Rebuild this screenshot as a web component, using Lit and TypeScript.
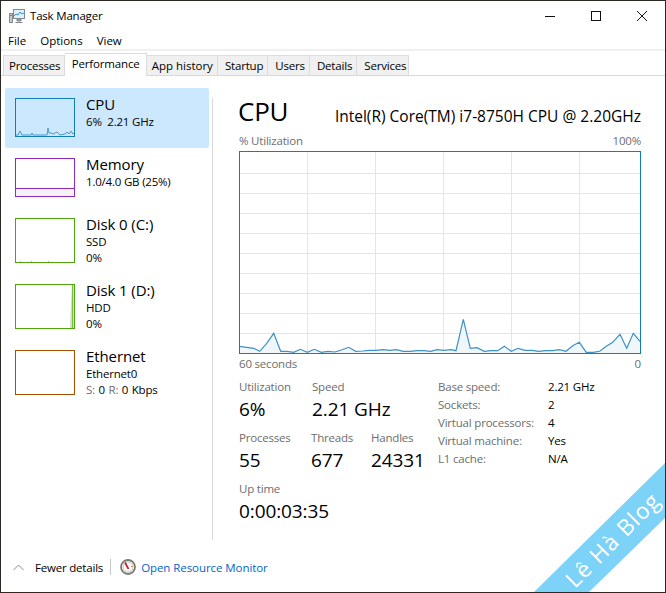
import { LitElement, html, css, svg } from "lit";
import { customElement } from "lit/decorators.js";

const left: [number, number][] = [[22,199],[65,205],[83,214],[104,190],[125,160],[146,214],[165,214],[185,217],[205,208],[226,217],[247,208],[268,217],[288,214],[309,216],[330,209],[350,202],[371,214],[392,213],[412,211],[432,211],[453,209],[473,211],[493,209],[514,214],[535,214],[555,212],[576,212],[596,214],[615,209],[636,211]];
const right: [number, number][] = [[15,209],[30,212],[52,118],[73,205],[93,203],[115,214],[135,212],[155,212],[175,199],[196,214],[216,205],[237,211],[258,211],[278,214],[298,212],[320,212],[340,209],[360,214],[380,197],[400,187],[421,217],[441,217],[461,214],[481,199],[500,187],[522,163],[542,205],[562,160],[582,184]];
const pts: [number, number][] = [
  ...left.map(([x, y]) => [232 + x / 3 - 239, 280 + y / 3 - 151] as [number, number]),
  ...right.map(([x, y]) => [446 + x / 3 - 239, 280 + y / 3 - 151] as [number, number]),
];
const linePts = pts.map(([x, y]) => `${x.toFixed(1)},${y.toFixed(1)}`).join(" ");
const W = 401, H = 202;

function chart() {
  const v = [68, 136, 204, 272, 340];
  const h = [22, 42, 62, 82, 102, 122, 142, 162, 182];
  return html`<svg class="chart" width="402" height="203" viewBox="0 0 402 203">
    ${v.map((x) => svg`<line x1=${x + 0.5} x2=${x + 0.5} y1="0" y2=${H} stroke="#d9e8f2"/>`)}
    ${h.map((y) => svg`<line x1="0" x2=${W} y1=${y + 0.5} y2=${y + 0.5} stroke="#d9e8f2"/>`)}
    <polygon points="0,${H} ${linePts} ${W},${H}" fill="#f1f6fa"/>
    <polyline points=${linePts} fill="none" stroke="#3d92c8" stroke-width="1.2"/>
    <rect x="0.5" y="0.5" width=${W} height=${H} fill="none" stroke="#117dbb"/>
  </svg>`;
}

function thumb(kind: string, color: string, w: number, hh: number) {
  const inner = w - 1, bot = hh - 1;
  let content: unknown = null;
  if (kind === "cpu") {
    const p = [[0,0],[3,0],[5,-4],[7,0],[16,0],[17,-2],[18,0],[32,0],[33,-7],[34,-2],[36,-2],[38,-1],[42,-3],[45,0],[50,-1],[52,-3],[54,-1],[56,-4],[58,-1],[60,-3]];
    const s = p.map(([x, y]) => `${x},${bot - 1 + y}`).join(" ");
    content = svg`<polygon points="0,${bot} ${s} 60,${bot}" fill="#cfe5f3"/><polyline points=${s} fill="none" stroke="#4a9bcb"/>`;
  } else if (kind === "mem") {
    content = svg`<rect x="0" y="30" width=${w - 1} height="9" fill="#f4f2f8"/><line x1="0" x2=${w - 1} y1="30.5" y2="30.5" stroke=${color}/>`;
  } else if (kind === "d0") {
    content = svg`<path d="M5.5 44v-1M16.5 44v-1M33.5 44v-1" stroke="#9fce7f"/>`;
  } else if (kind === "d1") {
    content = svg`<polygon points="55,44 56,18 57,0 59,0 59,44" fill="#cfe2c0"/><line x1="57.5" x2="57.5" y1="0" y2="44" stroke="#7dbb4c"/>`;
  }
  return html`<svg class="thumb" width=${w + 1} height=${hh + 1} viewBox="0 0 ${w + 1} ${hh + 1}">
    ${content}
    <rect x="0.5" y="0.5" width=${inner} height=${bot} fill="none" stroke=${color}/>
  </svg>`;
}

@customElement("app-root")
export class AppRoot extends LitElement {
  static styles = css`
    :host {
      display: block;
      width: 666px;
      height: 593px;
      box-sizing: border-box;
      border: 1px solid #2b2723;
      background: #fff;
      position: relative;
      overflow: hidden;
      font-family: "Open Sans", "Noto Sans", sans-serif;
      font-size: 11.5px;
      letter-spacing: -0.2px;
      color: #000;
    }
    .titlebar { height: 29px; display: flex; align-items: center; padding-left: 8px; }
    .app-icon { margin-right: 5px; }
    .title { flex: 1; }
    .winbtns { display: flex; height: 29px; }
    .winbtn { width: 46px; display: flex; align-items: center; justify-content: center; }
    .menu { height: 18px; padding-top: 1px; display: flex; align-items: center; gap: 14px; padding-left: 7px; letter-spacing: 0; }
    .band { height: 2px; background: #f0f0f0; }
    .tabs { height: 24px; display: flex; align-items: flex-end; padding-left: 2px; border-bottom: 1px solid #d9d9d9; }
    .tab {
      height: 20px; box-sizing: border-box; padding: 0 4px 0 5px; display: flex; align-items: center;
      background: #f0f0f0; border: 1px solid #dcdcdc; border-bottom: none; border-left: none;
      letter-spacing: 0;
    }
    .tab.first { border-left: 1px solid #dcdcdc; letter-spacing: -0.25px; }
    .tab.active { height: 23px; background: #fff; padding: 0 6px 4px 6.5px; margin-bottom: -1px; position: relative; letter-spacing: -0.15px; }
    .tab.tight { padding: 0 4px 0 7px; letter-spacing: -0.18px; }
    .tab.last { padding-right: 2px; }
    .main { display: flex; height: 474px; }
    .side { width: 211px; margin-top: 12px; box-sizing: border-box; padding-left: 4px; flex: none; }
    .divider { width: 1px; flex: none; background: #d9d9d9; margin-top: 22px; height: 442px; }
    .item { display: flex; width: 204px; box-sizing: border-box; padding: 10px 0 0 10px; }
    .item.sel { background: #cce8ff; height: 60px; border-radius: 2px; }
    .h60 { height: 60px; }
    .h66 { height: 66px; }
    .thumb { flex: none; display: block; }
    .info { margin-left: 10px; margin-top: -3px; line-height: 15.5px; white-space: nowrap; }
    .name { font-size: 15px; line-height: 19px; letter-spacing: -0.1px; }
    .wide { word-spacing: 0.8px; }
    .mut { color: #6d6d6d; }
    .content { flex: 1; padding: 0 24px 0 26px; min-width: 0; }
    .head { display: flex; justify-content: space-between; align-items: flex-end; height: 45px; margin-top: 12px; }
    .cpu { font-size: 26px; line-height: 34px; letter-spacing: -0.2px; margin-bottom: 5px; margin-left: -1px; }
    .model { font-size: 15.5px; line-height: 20px; letter-spacing: 0; margin-bottom: 7px; white-space: nowrap; }
    .cap { display: flex; justify-content: space-between; color: #6d6d6d; height: 15px; line-height: 15px; }
    .cap.top { margin-bottom: 3px; }
    .cap.bottom { margin-top: 2px; }
    .chart { display: block; }
    .stats { display: flex; margin-top: 7px; }
    .lefts { width: 199px; flex: none; padding-top: 1px; }
    .srow { display: flex; margin-bottom: 7px; }
    .stat { flex: none; }
    .w73 { width: 73px; }
    .w72 { width: 72px; }
    .w60 { width: 60px; }
    .lab { color: #6d6d6d; line-height: 16px; height: 16px; }
    .val { font-size: 19px; line-height: 28px; letter-spacing: -0.1px; }
    .grid { display: grid; grid-template-columns: 110px auto; grid-auto-rows: 18px; line-height: 18px; align-self: flex-start; }
    .foot { display: flex; align-items: center; height: 34px; padding-left: 12px; }
    .chev { margin-right: 11px; }
    .sep { width: 1px; height: 16px; background: #c8c8c8; margin: 0 9px 0 7px; }
    .link { color: #0066cc; margin-left: 5px; letter-spacing: -0.07px; }
    .mark { position: absolute; right: -1px; bottom: -1px; display: block; }
    .mark text { font-family: "Open Sans", sans-serif; font-size: 22.5px; fill: #fff; letter-spacing: 1.2px; }
  `;

  render() {
    return html`
      <div class="titlebar">
        <svg class="app-icon" width="16" height="16" viewBox="0 0 16 16">
          <rect x="0.5" y="5.5" width="3" height="9" fill="#c9c9c9" stroke="#8a8a8a"/>
          <rect x="1" y="7" width="2" height="1" fill="#4caf50"/>
          <rect x="4.5" y="1.5" width="11" height="9" fill="#dff0fb" stroke="#7c8b96"/>
          <path d="M5 8l2-2 2 1 2-3 2 2 2-1" fill="none" stroke="#3b8fd0"/>
          <path d="M8 11h4v2H8zM6.5 14.5h7" fill="#9a9a9a" stroke="#8a8a8a"/>
        </svg>
        <span class="title">Task Manager</span>
        <div class="winbtns">
          <div class="winbtn"><svg width="10" height="10" viewBox="0 0 10 10"><path d="M0 5.5h10" stroke="#111"/></svg></div>
          <div class="winbtn"><svg width="10" height="10" viewBox="0 0 10 10"><rect x="0.5" y="0.5" width="9" height="9" fill="none" stroke="#111"/></svg></div>
          <div class="winbtn"><svg width="10" height="10" viewBox="0 0 10 10"><path d="M0 0l10 10M10 0L0 10" stroke="#111"/></svg></div>
        </div>
      </div>
      <div class="menu"><span>File</span><span>Options</span><span>View</span></div>
      <div class="band"></div>
      <div class="tabs">
        <div class="tab first">Processes</div>
        <div class="tab active">Performance</div>
        <div class="tab">App history</div>
        <div class="tab tight">Startup</div>
        <div class="tab tight">Users</div>
        <div class="tab tight">Details</div>
        <div class="tab tight last">Services</div>
      </div>
      <div class="main">
        <div class="side">
          <div class="item sel">
            ${thumb("cpu", "#117dbb", 60, 39)}
            <div class="info"><div class="name">CPU</div><div>6%&nbsp; 2.21 GHz</div></div>
          </div>
          <div class="item h60">
            ${thumb("mem", "#9528b4", 60, 39)}
            <div class="info"><div class="name">Memory</div><div>1.0/4.0 GB (25%)</div></div>
          </div>
          <div class="item h66">
            ${thumb("d0", "#4da60c", 60, 45)}
            <div class="info"><div class="name">Disk 0 (C:)</div><div>SSD</div><div>0%</div></div>
          </div>
          <div class="item h66">
            ${thumb("d1", "#4da60c", 60, 45)}
            <div class="info"><div class="name">Disk 1 (D:)</div><div>HDD</div><div>0%</div></div>
          </div>
          <div class="item h66">
            ${thumb("eth", "#a74f01", 60, 45)}
            <div class="info"><div class="name">Ethernet</div><div>Ethernet0</div><div class="wide"><span class="mut">S:</span> 0 <span class="mut">R:</span> 0 Kbps</div></div>
          </div>
        </div>
        <div class="divider"></div>
        <div class="content">
          <div class="head"><div class="cpu">CPU</div><div class="model">Intel(R) Core(TM) i7-8750H CPU @ 2.20GHz</div></div>
          <div class="cap top"><span>% Utilization</span><span>100%</span></div>
          ${chart()}
          <div class="cap bottom"><span>60 seconds</span><span>0</span></div>
          <div class="stats">
            <div class="lefts">
              <div class="srow">
                <div class="stat w73"><div class="lab">Utilization</div><div class="val">6%</div></div>
                <div class="stat"><div class="lab">Speed</div><div class="val">2.21 GHz</div></div>
              </div>
              <div class="srow">
                <div class="stat w72"><div class="lab">Processes</div><div class="val">55</div></div>
                <div class="stat w60"><div class="lab">Threads</div><div class="val">677</div></div>
                <div class="stat"><div class="lab">Handles</div><div class="val">24331</div></div>
              </div>
              <div class="srow">
                <div class="stat"><div class="lab">Up time</div><div class="val">0:00:03:35</div></div>
              </div>
            </div>
            <div class="grid">
              <span class="mut">Base speed:</span><span>2.21 GHz</span>
              <span class="mut">Sockets:</span><span>2</span>
              <span class="mut">Virtual processors:</span><span>4</span>
              <span class="mut">Virtual machine:</span><span>Yes</span>
              <span class="mut">L1 cache:</span><span>N/A</span>
            </div>
          </div>
        </div>
      </div>
      <div class="foot">
        <svg class="chev" width="11" height="7" viewBox="0 0 11 7"><path d="M0.5 6L5.5 1l5 5" fill="none" stroke="#8a8a8a"/></svg>
        <span>Fewer details</span>
        <div class="sep"></div>
        <svg width="16" height="16" viewBox="0 0 16 16">
          <circle cx="8" cy="8" r="7" fill="#fff" stroke="#7d7a76" stroke-width="1.8"/>
          <circle cx="8" cy="8" r="5" fill="#fff" stroke="#c9c4bd"/>
          <path d="M5 3.5L8.5 10" stroke="#c8202a" stroke-width="1.7"/>
          <path d="M11 7.5h1.8" stroke="#d08a30"/>
        </svg>
        <span class="link">Open Resource Monitor</span>
      </div>
      <svg class="mark" width="134" height="132" viewBox="532 461 134 132">
        <polygon points="533,593 666,462 666,517 588,593" fill="#7dd2f7"/>
        <text transform="translate(575 589) rotate(-45)">Lê Hà Blog</text>
      </svg>
    `;
  }
}
